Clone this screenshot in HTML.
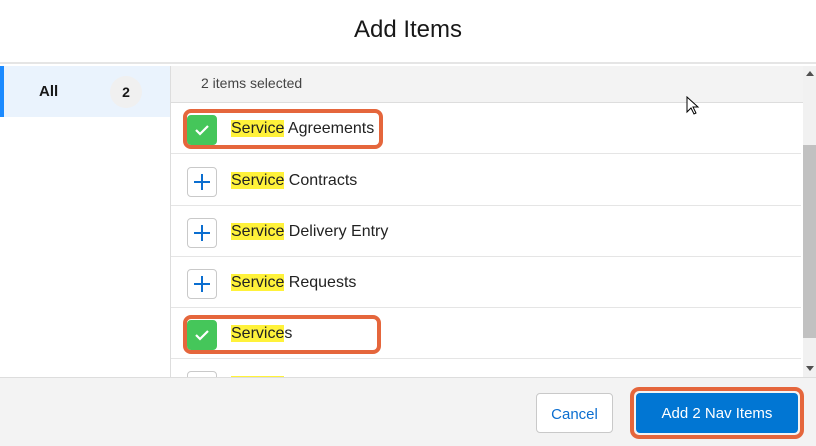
<!DOCTYPE html>
<html><head><style>
*{box-sizing:border-box;margin:0;padding:0}
body{width:816px;height:446px;overflow:hidden;background:#fff;font-family:"Liberation Sans",sans-serif;color:#181818;position:relative}
.hdr{position:absolute;left:0;top:0;width:816px;height:64px;background:#fff;border-bottom:2px solid #e5e5e5;text-align:center;line-height:60px;font-size:24px;color:#181818}
.left{position:absolute;left:0;top:66px;width:171px;height:311px;background:#fff;border-right:1px solid #ddd}
.all{position:absolute;left:0;top:0;width:170px;height:51px;background:#eaf3fd;border-left:4px solid #1b8aff}
.all .t{position:absolute;left:35px;top:17px;font-weight:bold;font-size:15px}
.all .b{position:absolute;left:106px;top:10px;width:32px;height:32px;border-radius:16px;background:#f0f0f0;text-align:center;line-height:32px;font-weight:bold;font-size:14px}
.sel{position:absolute;left:171px;top:66px;width:632px;height:37px;background:#f3f3f3;border-bottom:1px solid #ddd;font-size:14px;color:#444;padding:9px 0 0 30px}
.row{position:absolute;left:171px;width:630px;height:51px;background:#fff;border-bottom:1px solid #e5e5e5}
.cb{position:absolute;left:16px;top:12px;width:30px;height:30px;border:1px solid #c9c9c9;border-radius:4px;background:#fff}
.cb.on{background:#45c65a;border-color:#45c65a}
.lbl{position:absolute;left:60px;top:17px;font-size:16px;color:#222}
.hl{background:#fff23a}
.ring{position:absolute;border:3px solid #e5663c;border-radius:8px}
.sb{position:absolute;left:803px;top:66px;width:13px;height:311px;background:#f1f1f1}
.thumb{position:absolute;left:803px;top:145px;width:13px;height:193px;background:#c1c1c1}
.ftr{position:absolute;left:0;top:377px;width:816px;height:69px;background:#f3f3f3;border-top:1px solid #ddd}
.btn{position:absolute;top:393px;height:40px;border-radius:4px;font-size:15px;text-align:center;line-height:41px}
</style></head><body>
<div class="hdr">Add Items</div>
<div class="left"><div class="all"><span class="t">All</span><span class="b">2</span></div></div>
<div class="sel">2 items selected</div>

<div class="row" style="top:103px"><div class="cb on"><svg width="28" height="28" viewBox="0 0 28 28"><path d="M8 14l4 4 8-8" stroke="#fff" stroke-width="2.2" fill="none"/></svg></div><div class="lbl"><span class="hl">Service</span> Agreements</div></div>
<div class="row" style="top:155px"><div class="cb"><svg width="28" height="28" viewBox="0 0 28 28"><path d="M14 6v16M6 14h16" stroke="#0b6ed0" stroke-width="2"/></svg></div><div class="lbl"><span class="hl">Service</span> Contracts</div></div>
<div class="row" style="top:206px"><div class="cb"><svg width="28" height="28" viewBox="0 0 28 28"><path d="M14 6v16M6 14h16" stroke="#0b6ed0" stroke-width="2"/></svg></div><div class="lbl"><span class="hl">Service</span> Delivery Entry</div></div>
<div class="row" style="top:257px"><div class="cb"><svg width="28" height="28" viewBox="0 0 28 28"><path d="M14 6v16M6 14h16" stroke="#0b6ed0" stroke-width="2"/></svg></div><div class="lbl"><span class="hl">Service</span> Requests</div></div>
<div class="row" style="top:308px"><div class="cb on"><svg width="28" height="28" viewBox="0 0 28 28"><path d="M8 14l4 4 8-8" stroke="#fff" stroke-width="2.2" fill="none"/></svg></div><div class="lbl"><span class="hl">Service</span>s</div></div>
<div class="row" style="top:359px;height:18px;overflow:hidden;border:none"><div class="cb"></div><div class="lbl"><span class="hl" style="color:#fff23a">Service</span></div></div>

<div class="ring" style="left:183px;top:109px;width:200px;height:40px;border-width:4px"></div>
<div class="ring" style="left:183px;top:315px;width:198px;height:39px;border-width:4px"></div>

<div class="sb"></div><div class="thumb"></div>
<div style="position:absolute;left:806px;top:71px;width:0;height:0;border-left:4px solid transparent;border-right:4px solid transparent;border-bottom:5px solid #505050"></div>
<div style="position:absolute;left:806px;top:366px;width:0;height:0;border-left:4px solid transparent;border-right:4px solid transparent;border-top:5px solid #505050"></div>

<svg style="position:absolute;left:686px;top:96px" width="14" height="20" viewBox="0 0 14 20"><path d="M1 1v15l4-4 3 6 2-1-3-6h5z" fill="#fff" stroke="#000" stroke-width="1"/></svg>

<div class="ftr"></div>
<div class="btn" style="left:536px;width:77px;background:#fff;border:1px solid #c9c9c9;color:#0b6ed0">Cancel</div>
<div class="ring" style="left:630px;top:387px;width:174px;height:52px;border-radius:9px;border-width:4px"></div>
<div class="btn" style="left:636px;width:162px;background:#0176d3;color:#fff">Add 2 Nav Items</div>
</body></html>
